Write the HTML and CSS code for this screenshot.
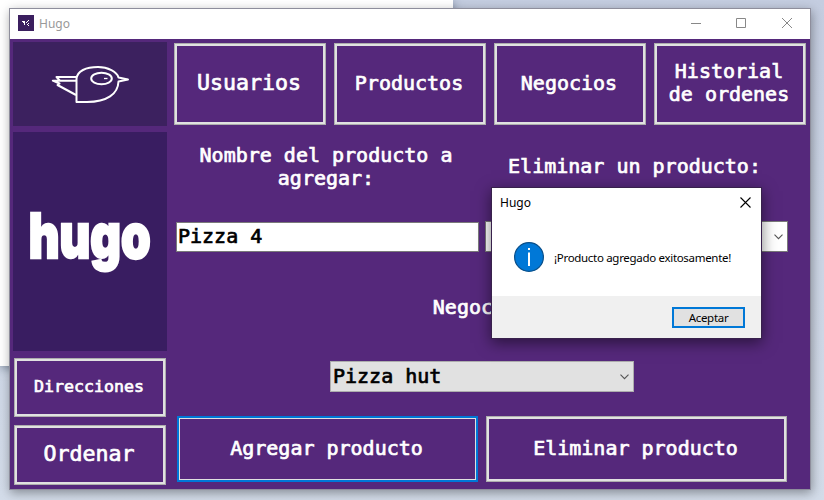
FILE: index.html
```html
<!DOCTYPE html>
<html lang="es">
<head>
<meta charset="utf-8">
<title>Hugo</title>
<link rel="stylesheet" href="styles.css">
</head>
<body>
<div class="back-window"></div>
<main class="window">
  <header class="titlebar">
    <svg class="app-icon" viewBox="0 0 16 16"><rect width="16" height="16" fill="#3b1f5f"/><path d="M4 6.500h3M5 7.500h2M6 8.500h1M6 9.500h1M8 7.500h1M9 6.500h1M10 5.500h1M9 9.500h1M10 8.500h1M10 10.500h1" fill="none" stroke="#fff"/></svg>
    <span class="title">Hugo</span>
    <svg class="controls" viewBox="0 0 104 12"><path d="M1 6.500h10M46.500 1.500h9v9h-9zM92 1l10 10M102 1L92 11" fill="none" stroke="#888"/></svg>
  </header>
  <div class="content">
    <aside class="sidebar">
      <div class="bird">
        <svg viewBox="0 0 154 84"><g fill="none" stroke="#fff" stroke-width="2" stroke-linejoin="round"><path d="M63.500 60V37C64 29 73 25 85 25C95 25 104 30 105.500 35.500L115 37.500L105.500 39.500C105 52 94 60 74 60Z"/><path d="M63 35H43.500L47 38.700H39.800L46.500 41.500L44.500 43L63 53M47 38.700H63"/><ellipse cx="88.500" cy="36.500" rx="10.300" ry="5.700"/><path d="M91 36.500h3.500" stroke-width="1.300"/></g></svg>
      </div>
      <div class="brand"><span class="brand-text">hugo</span></div>
      <button class="btn btn-small side-a">Direcciones</button>
      <button class="btn btn-large side-b">Ordenar</button>
    </aside>
    <section class="main">
      <nav class="nav">
        <button class="btn btn-large">Usuarios</button>
        <button class="btn">Productos</button>
        <button class="btn">Negocios</button>
        <button class="btn">Historial<br>de ordenes</button>
      </nav>
      <div class="labels">
        <label class="label">Nombre del producto a<br>agregar:</label>
        <label class="label label-remove">Eliminar un producto:</label>
      </div>
      <div class="fields">
        <div class="input">Pizza 4</div>
        <div class="select select-light"><span></span><svg class="chevron" viewBox="0 0 9 6"><path d="M.5.700l4 4l4-4" fill="none" stroke="#555" stroke-width="1.100"/></svg></div>
      </div>
      <label class="label business">Negocio:</label>
      <div class="select shop"><span>Pizza hut</span><svg class="chevron" viewBox="0 0 9 6"><path d="M.5.700l4 4l4-4" fill="none" stroke="#555" stroke-width="1.100"/></svg></div>
      <div class="actions">
        <button class="btn focused">Agregar producto</button>
        <button class="btn">Eliminar producto</button>
      </div>
    </section>
  </div>
</main>
<div class="dialog" role="dialog">
  <div class="dialog-head"><span class="dialog-title">Hugo</span><svg class="close" viewBox="0 0 11 11"><path d="M.5.500l10 10M10.500.500l-10 10" fill="none" stroke="#000" stroke-width="1.100"/></svg></div>
  <div class="dialog-body">
    <svg class="info" viewBox="0 0 30 30"><circle cx="15" cy="15" r="14.400" fill="#0078d7" stroke="#0a4f89" stroke-width="1.200"/><path d="M14 6h2v2h-2zM14 10.500h2v13.500h-2z" fill="#fff"/></svg>
    <span class="message">¡Producto agregado exitosamente!</span>
  </div>
  <div class="dialog-foot"><button class="accept">Aceptar</button></div>
</div>
</body>
</html>
```
FILE: styles.css
```css
* { box-sizing: border-box; }
body {
  margin: 0;
  width: 824px;
  height: 500px;
  overflow: hidden;
  position: relative;
  padding: 8px 0 0 9px;
  background: linear-gradient(#c4cde0, #d3dce9);
  font-family: "Noto Sans", sans-serif;
}
button { margin: 0; padding: 0; }
svg { display: block; }
.back-window {
  position: absolute;
  left: 0;
  top: 0;
  width: 453px;
  height: 366px;
  background: #fff;
  box-shadow: 0 2px 9px rgba(40, 55, 80, .5);
}
.window {
  position: relative;
  width: 802px;
  height: 482px;
  border: 1px solid #8e8e9c;
  background: #55287b;
  box-shadow: 1px 3px 10px rgba(0, 0, 0, .36);
}
.titlebar {
  height: 30px;
  display: flex;
  align-items: center;
  background: #fff;
  padding: 0 16px 0 8px;
}
.app-icon { width: 16px; height: 16px; margin-top: -2px; }
.title {
  margin: -2px 0 0 5px;
  flex: 1;
  font-size: 12px;
  color: #999;
}
.controls { width: 104px; height: 12px; margin-top: -2px; }
.content { display: flex; padding: 3px 4px 0 3px; }
.sidebar { width: 154px; display: flex; flex-direction: column; }
.bird { height: 84px; background: #3c215f; }
.brand {
  display: flex;
  justify-content: center;
  align-items: center;
  height: 219px;
  margin-top: 6px;
  background: #391d61;
}
.brand-text {
  font: 900 62px/76px Inter, sans-serif;
  color: #fff;
  -webkit-text-stroke: 2.5px #fff;
  transform: translateY(-6px) scaleX(.765);
}
.btn {
  border: 1px solid #adadad;
  box-shadow: inset 0 0 0 2px #e1e1e1;
  background: #55287b;
  color: #fff;
  font: 20px/23px "DejaVu Sans Mono", monospace;
  -webkit-text-stroke: .7px currentColor;
  padding: 0 2px 2px 0;
}
.btn-large { font-size: 21.6px; padding-bottom: 3px; }
.btn-small { font-size: 16.6px; }
.side-a { height: 59px; margin: 7px 1px 0; }
.side-b { height: 60px; margin: 8px 1px 0; }
.main { flex: 1; padding: 1px 0 0 7px; display: flex; flex-direction: column; }
.nav { display: grid; grid-template-columns: repeat(4, 152px); gap: 8px; height: 82px; }
.labels {
  height: 85px;
  margin: -1px 13px 1px 2px;
  display: grid;
  grid-template-columns: 300px 1fr;
  align-items: center;
}
.label {
  text-align: center;
  color: #fff;
  font: 20px/23px "DejaVu Sans Mono", monospace;
  -webkit-text-stroke: .7px currentColor;
}
.fields { display: flex; gap: 6px; margin: 11px 0 0 2px; height: 31px; }
.input, .select {
  font: 20px/27px "DejaVu Sans Mono", monospace;
  -webkit-text-stroke: .7px currentColor;
  color: #000;
}
.input {
  width: 303px;
  height: 30px;
  margin-top: 1px;
  padding-left: 1px;
  line-height: 26px;
  border: 1px solid #7a7a7a;
  background: #fff;
}
.select {
  display: flex;
  align-items: center;
  justify-content: space-between;
  width: 304px;
  height: 31px;
  padding: 0 4px 0 2px;
  border: 1px solid #adadad;
  background: #e1e1e1;
}
.select-light { width: 303px; border-color: #7a7a7a; background: #fff; }
.chevron { width: 9px; height: 6px; }
.business { margin: 44px 0 0; padding-right: 18px; }
.shop { margin: 42px 0 0 156px; }
.actions { display: flex; gap: 8px; height: 66px; margin: 24px 0 0 3px; }
.actions .btn { width: 301px; }
.actions .btn.focused { border: 2px solid #0078d7; box-shadow: inset 0 0 0 1px #e1e1e1; }
.dialog {
  position: absolute;
  left: 491px;
  top: 187px;
  width: 271px;
  height: 152px;
  border: 1px solid #38214c;
  background: #fff;
  color: #000;
  box-shadow: 0 4px 14px rgba(0, 0, 0, .5);
  display: flex;
  flex-direction: column;
}
.dialog-head {
  height: 29px;
  display: flex;
  align-items: center;
  justify-content: space-between;
  padding: 0 10px 0 8px;
}
.dialog-title { font-size: 12px; }
.close { width: 11px; height: 11px; }
.dialog-body { height: 79px; padding: 25px 0 0 22px; display: flex; }
.info { width: 30px; height: 30px; }
.message {
  margin-left: 10px;
  font-size: 11.5px;
  line-height: 32px;
  white-space: nowrap;
  letter-spacing: -.31px;
}
.dialog-foot { height: 42px; background: #f0f0f0; padding: 11px 16px 0 0; display: flex; justify-content: flex-end; }
.accept {
  width: 73px;
  height: 21px;
  border: 2px solid #0078d7;
  background: #e1e1e1;
  color: #000;
  font: 11.5px/17px "Noto Sans", sans-serif;
  letter-spacing: -.3px;
}
```
